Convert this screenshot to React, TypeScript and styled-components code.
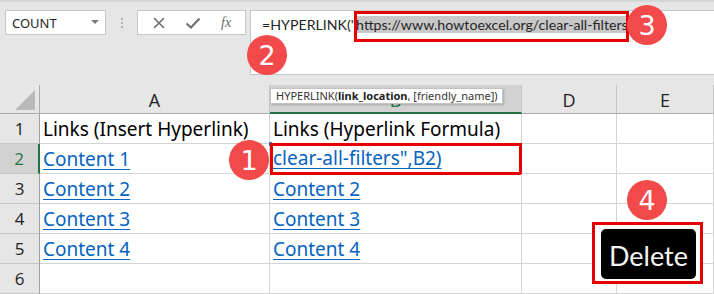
import React from "react";
import styled, { createGlobalStyle, css } from "styled-components";

const Global = createGlobalStyle`
  html, body { margin: 0; padding: 0; background: #e6e6e6; }
  body { width: 714px; height: 294px; overflow: hidden; }
`;

const Page = styled.div`
  position: relative;
  width: 714px;
  height: 294px;
  overflow: hidden;
  background: #e6e6e6;
  font-family: "Noto Sans", "Open Sans", sans-serif;
`;

const TopBar = styled.div`
  box-sizing: border-box;
  height: 85px;
  border-top: 2px solid #d6d6d6;
  padding: 8px 0 0 5px;
  display: flex;
  align-items: flex-start;
`;

const NameBox = styled.div`
  box-sizing: border-box;
  width: 101px;
  height: 25px;
  background: #fff;
  border: 1px solid #c6c6c6;
  display: flex;
  align-items: center;
  justify-content: space-between;
  padding: 0 6px 0 6px;
  font-size: 13px;
  color: #262626;
`;

const Caret = styled.span`
  width: 0;
  height: 0;
  border-left: 4px solid transparent;
  border-right: 4px solid transparent;
  border-top: 4px solid #7a7a7a;
  margin-bottom: 2px;
`;

const Grip = styled.div`
  width: 31px;
  height: 25px;
  display: flex;
  flex-direction: column;
  align-items: center;
  justify-content: center;
  gap: 2px;
  & > span {
    width: 2px;
    height: 2px;
    background: #b0b0b0;
  }
`;

const FxBox = styled.div`
  box-sizing: border-box;
  width: 109px;
  height: 25px;
  background: #fff;
  border: 1px solid #c6c6c6;
  display: flex;
  align-items: center;
  justify-content: space-around;
  padding: 0 4px;
  color: #7a7a7a;
`;

const FxText = styled.span`
  font-family: "Liberation Serif", serif;
  font-style: italic;
  font-size: 14px;
  color: #6a6a6a;
`;

const FormulaBar = styled.div`
  box-sizing: border-box;
  margin-left: 4px;
  flex: 1;
  height: 65px;
  background: #fff;
  border: 1px solid #c6c6c6;
  border-right: none;
  padding: 4px 0 0 11px;
  font-family: "Lato", sans-serif;
  font-size: 14.2px;
  line-height: 19px;
  color: #262626;
  white-space: nowrap;
`;

const Selected = styled.span`
  position: relative;
  background: #c8c8c8;
  &::after {
    content: "";
    position: absolute;
    left: -2px;
    right: -1px;
    top: -5px;
    bottom: -9px;
    border: 3px solid #e60000;
  }
`;

const Cursor = styled.span`
  display: inline-block;
  width: 1px;
  height: 18px;
  background: #000;
  vertical-align: -3px;
`;

const Sheet = styled.div`
  display: grid;
  grid-template-columns: 40px 230px 252px 95px 1fr;
  grid-template-rows: 29px repeat(6, 30px);
  background: #fff;
`;

const Corner = styled.div`
  background: #e6e6e6;
  border-right: 1px solid #ababab;
  border-bottom: 1px solid #ababab;
  position: relative;
  &::after {
    content: "";
    position: absolute;
    right: 4px;
    bottom: 3px;
    width: 0;
    height: 0;
    border-left: 20px solid transparent;
    border-bottom: 20px solid #b9b9b9;
  }
`;

const ColHead = styled.div<{ $active?: boolean }>`
  box-sizing: border-box;
  background: ${(p) => (p.$active ? "#d2d2d2" : "#e6e6e6")};
  border-right: 1px solid #c6c6c6;
  border-bottom: ${(p) => (p.$active ? "2px solid #217346" : "1px solid #ababab")};
  display: flex;
  align-items: center;
  justify-content: center;
  font-family: "Open Sans", sans-serif;
  font-size: 18px;
  color: ${(p) => (p.$active ? "#217346" : "#222")};
  padding-top: 2px;
`;

const RowHead = styled.div<{ $active?: boolean }>`
  box-sizing: border-box;
  background: ${(p) => (p.$active ? "#d2d2d2" : "#e6e6e6")};
  border-right: ${(p) => (p.$active ? "2px solid #217346" : "1px solid #9e9e9e")};
  border-bottom: 1px solid #c6c6c6;
  display: flex;
  align-items: center;
  justify-content: center;
  font-family: "Open Sans", sans-serif;
  font-size: 17px;
  color: ${(p) => (p.$active ? "#217346" : "#222")};
`;

const Cell = styled.div<{ $active?: boolean; $marked?: boolean }>`
  box-sizing: border-box;
  position: relative;
  border-right: 1px solid #d4d4d4;
  border-bottom: 1px solid #d4d4d4;
  padding: 0 0 0 3px;
  display: flex;
  align-items: center;
  font-family: "Noto Sans", sans-serif;
  font-size: 19px;
  color: #000;
  white-space: nowrap;
  ${(p) =>
    p.$active &&
    css`
      border-bottom: 2px solid #217346;
    `}
  ${(p) =>
    p.$marked &&
    css`
      &::after {
        content: "";
        position: absolute;
        left: 0;
        right: -1px;
        top: -1px;
        bottom: -3px;
        border: 3px solid #e60000;
      }
      &::before {
        content: "";
        position: absolute;
        left: -1px;
        top: -2px;
        width: 3px;
        height: 4px;
        background: #2f6fd6;
      }
    `}
`;

const Link = styled.span`
  color: #0563c1;
  text-decoration: underline;
  text-underline-offset: 3px;
  text-decoration-thickness: 1px;
`;

const Tooltip = styled.div`
  position: absolute;
  left: 270px;
  top: 88px;
  box-sizing: border-box;
  height: 16px;
  padding: 0 4px 0 5px;
  background: #fff;
  border: 1px solid #c3c3c3;
  box-shadow: 1px 1px 2px rgba(0, 0, 0, 0.2);
  font-family: "Noto Sans", sans-serif;
  font-size: 11px;
  line-height: 14px;
  color: #333;
  white-space: nowrap;
  & b { font-weight: 700; color: #222; }
`;

const Badge = styled.div<{ $x: number; $y: number }>`
  position: absolute;
  left: ${(p) => p.$x - 20}px;
  top: ${(p) => p.$y - 20}px;
  width: 40px;
  height: 40px;
  border-radius: 50%;
  background: #f24a4a;
  color: #fff;
  display: flex;
  align-items: center;
  justify-content: center;
  font-family: "DejaVu Sans", sans-serif;
  font-size: 27px;
  line-height: 1;
`;

const KeyFrame = styled.div`
  position: absolute;
  left: 592px;
  top: 222px;
  width: 111px;
  height: 62px;
  box-sizing: border-box;
  border: 3px solid #e60000;
  padding: 4px 4px 2px 6px;
  background: #fff;
`;

const Key = styled.div`
  width: 100%;
  height: 100%;
  box-sizing: border-box;
  border-radius: 5px;
  background: #000;
  color: #f4f4f4;
  display: flex;
  align-items: center;
  justify-content: center;
  font-family: "Lato", sans-serif;
  font-weight: 400;
  font-size: 27px;
  padding-top: 3px;
`;

const rows: [string, string][] = [
  ["Content 2", "Content 2"],
  ["Content 3", "Content 3"],
  ["Content 4", "Content 4"],
];

export default function App() {
  return (
    <Page>
      <Global />
      <TopBar>
        <NameBox>
          COUNT
          <Caret />
        </NameBox>
        <Grip>
          <span />
          <span />
          <span />
        </Grip>
        <FxBox>
          <svg width="14" height="14" viewBox="0 0 14 14">
            <path d="M2 2 L12 12 M12 2 L2 12" stroke="#6e6e6e" strokeWidth="1.6" fill="none" />
          </svg>
          <svg width="16" height="14" viewBox="0 0 16 14">
            <path d="M1.5 7.5 L6 11.5 L14.5 2.5" stroke="#6e6e6e" strokeWidth="2" fill="none" />
          </svg>
          <FxText>fx</FxText>
        </FxBox>
        <FormulaBar>
          =HYPERLINK("<Selected>https://www.howtoexcel.org/clear-all-filters</Selected>
          <Cursor />
        </FormulaBar>
      </TopBar>
      <Sheet>
        <Corner />
        <ColHead>A</ColHead>
        <ColHead $active>B</ColHead>
        <ColHead>D</ColHead>
        <ColHead>E</ColHead>

        <RowHead>1</RowHead>
        <Cell>Links (Insert Hyperlink)</Cell>
        <Cell>Links (Hyperlink Formula)</Cell>
        <Cell />
        <Cell />

        <RowHead $active>2</RowHead>
        <Cell>
          <Link>Content 1</Link>
        </Cell>
        <Cell $active $marked>
          <Link>clear-all-filters",B2)</Link>
        </Cell>
        <Cell />
        <Cell />

        {rows.map(([a, b], i) => (
          <React.Fragment key={i}>
            <RowHead>{i + 3}</RowHead>
            <Cell>
              <Link>{a}</Link>
            </Cell>
            <Cell>
              <Link>{b}</Link>
            </Cell>
            <Cell />
            <Cell />
          </React.Fragment>
        ))}

        <RowHead>6</RowHead>
        <Cell />
        <Cell />
        <Cell />
        <Cell />
      </Sheet>

      <Tooltip>
        HYPERLINK(<b>link_location</b>, [friendly_name])
      </Tooltip>

      <Badge $x={249} $y={160}>1</Badge>
      <Badge $x={267} $y={55}>2</Badge>
      <Badge $x={647} $y={25}>3</Badge>
      <Badge $x={647} $y={200}>4</Badge>

      <KeyFrame>
        <Key>Delete</Key>
      </KeyFrame>
    </Page>
  );
}
